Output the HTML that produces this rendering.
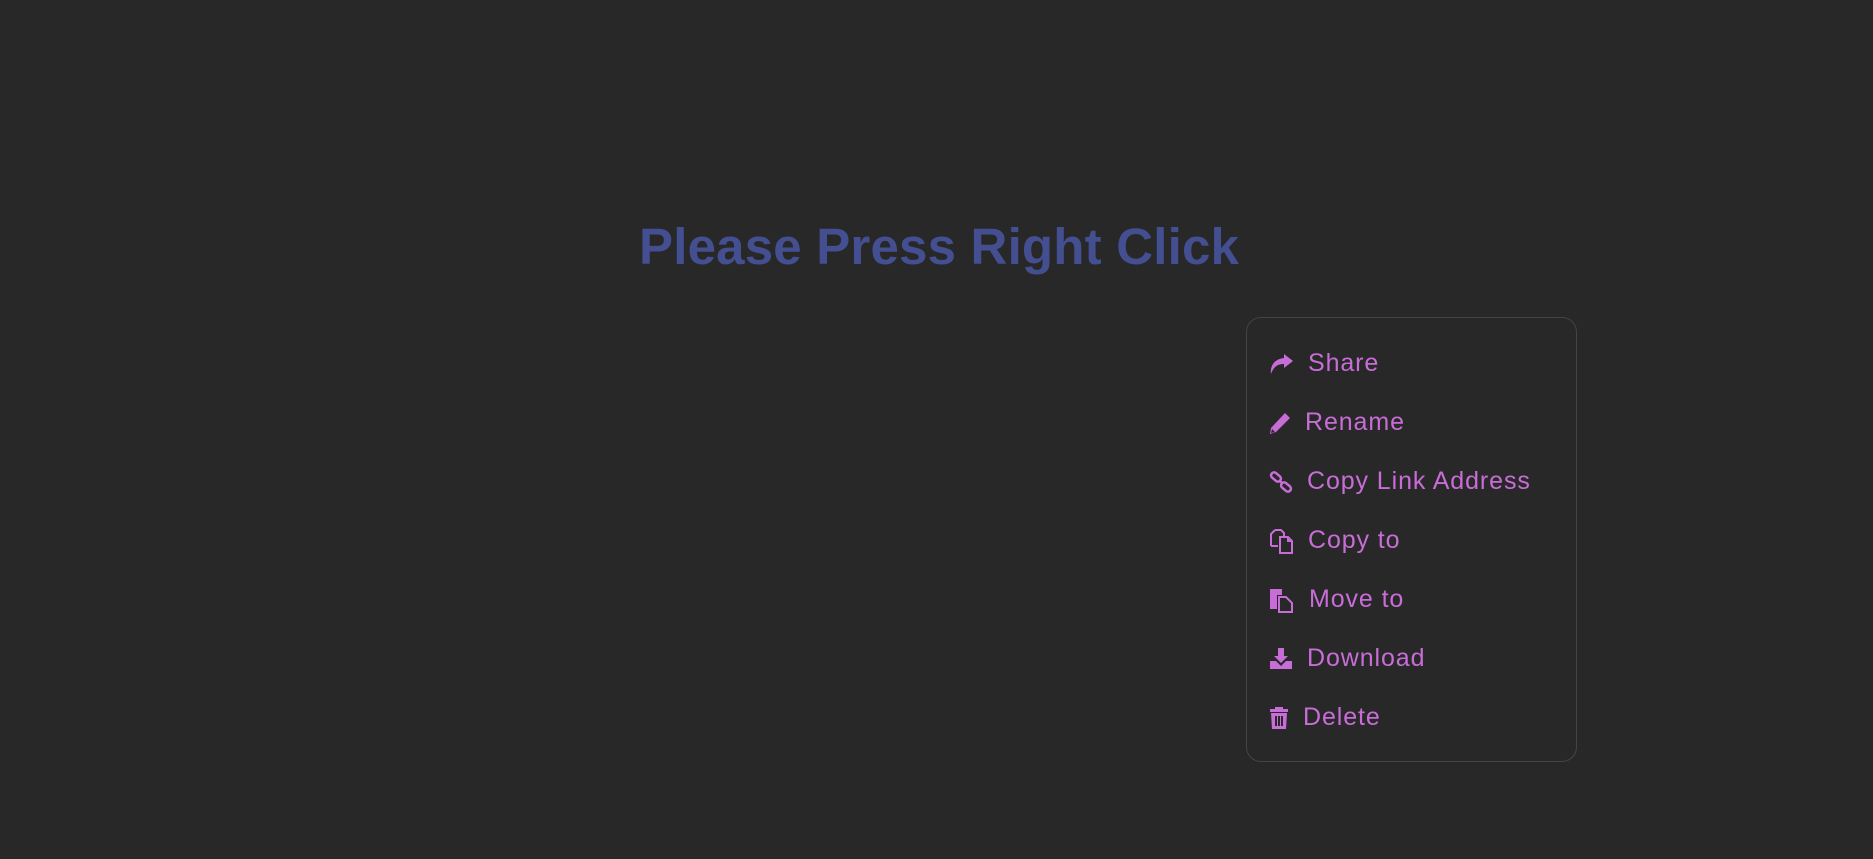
<!DOCTYPE html>
<html><head><meta charset="utf-8"><style>
html,body{margin:0;padding:0;width:1873px;height:859px;background:#282828;overflow:hidden;font-family:"Liberation Sans",sans-serif}
h1{position:absolute;left:639px;top:217px;margin:0;font-size:51px;letter-spacing:0.2px;font-weight:bold;color:#444f92;line-height:60px;white-space:nowrap}
.menu{position:absolute;left:1246px;top:317px;width:331px;height:445px;border:1.5px solid #444;border-radius:15px;box-sizing:border-box}
.row{position:absolute;left:1269px;height:59px;line-height:59px;color:#c86dd7;font-size:25px;letter-spacing:0.9px;white-space:nowrap}
.row svg{position:absolute;left:0;top:18px;fill:#c86dd7}
.row span{position:absolute;top:0}
</style></head><body>
<h1>Please Press Right Click</h1>
<div class="menu"></div>
<div class="row" style="top:334px"><svg width="25" height="24" viewBox="0 0 25 24"><path d="M15 2 L24 9 L15 16 V12 C9 12 5 14 2 22 C1 13 6 7 15 6 Z"/></svg><span style="left:39px">Share</span></div>
<div class="row" style="top:393px"><svg width="22" height="24" viewBox="0 0 22 24"><path d="M16 2 L21 7 L7 21 L1 23 L2 17 Z M3 18 L2 22 L6 21 Z" fill-rule="evenodd"/></svg><span style="left:36px">Rename</span></div>
<div class="row" style="top:452px"><svg width="24" height="24" viewBox="0 0 24 24" style="fill:none;stroke:#c86dd7;stroke-width:2.5"><rect x="1.5" y="4" width="11" height="6" rx="3" transform="rotate(40 7 7)"/><rect x="11.5" y="14" width="11" height="6" rx="3" transform="rotate(40 17 17)"/><path d="M10 10 L14 14"/></svg><span style="left:38px">Copy Link Address</span></div>
<div class="row" style="top:511px"><svg width="25" height="25" viewBox="0 0 25 25" style="fill:none;stroke:#c86dd7;stroke-width:2"><path d="M6 1 H12 L15 4 V7 M2 17 V5 L6 1"/><path d="M2 17 H9"/><path d="M11 8 H19 L23 12 V24 H11 Z"/><path d="M19 8 V12 H23"/></svg><span style="left:39px">Copy to</span></div>
<div class="row" style="top:570px"><svg width="25" height="25" viewBox="0 0 25 25"><path d="M1 1 H13 V7 H8 V21 H1 Z"/><path d="M10 9 H17 L23 15 V24 H10 Z" style="fill:none;stroke:#c86dd7;stroke-width:2"/></svg><span style="left:40px">Move to</span></div>
<div class="row" style="top:629px"><svg width="24" height="24" viewBox="0 0 24 24"><path d="M9 1 H15 V9 H19 L12 16 L5 9 H9 Z"/><path d="M1 14 H7 L12 19 L17 14 H23 V22 H1 Z"/></svg><span style="left:38px">Download</span></div>
<div class="row" style="top:688px"><svg width="20" height="24" viewBox="0 0 20 24"><path d="M6 1 H14 V3 H19 V6 H1 V3 H6 Z"/><path d="M2 7 H18 L17 23 H3 Z M6 10 V20 H8 V10 Z M9 10 V20 H11 V10 Z M12 10 V20 H14 V10 Z" fill-rule="evenodd"/></svg><span style="left:34px">Delete</span></div>
</body></html>
